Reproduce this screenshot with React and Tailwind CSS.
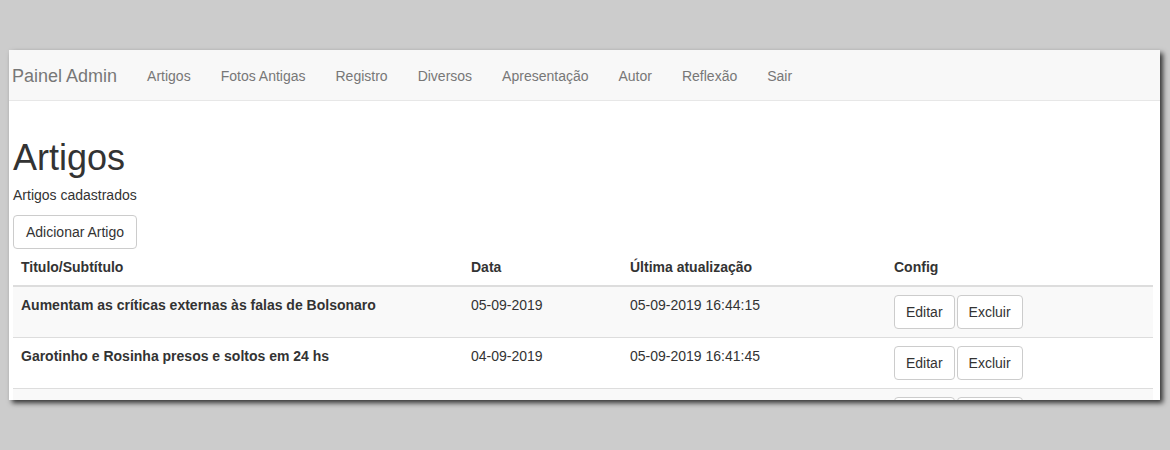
import React from 'react';

const navLinks = ['Artigos', 'Fotos Antigas', 'Registro', 'Diversos', 'Apresentação', 'Autor', 'Reflexão', 'Sair'];

const artigos = [
    { titulo: 'Aumentam as críticas externas às falas de Bolsonaro', data: '05-09-2019', atualizado: '05-09-2019 16:44:15' },
    { titulo: 'Garotinho e Rosinha presos e soltos em 24 hs', data: '04-09-2019', atualizado: '05-09-2019 16:41:45' },
    { titulo: 'Mourão diz que governo não vai interferir', data: '03-09-2019', atualizado: '04-09-2019 10:12:03' },
];

const btn = 'inline-block bg-white border border-[#cccccc] rounded-[4px] py-[6px] text-[14px] leading-[20px] text-[#333333] align-middle';

const App = () => {
    return (
        <div className="min-h-[450px] w-full bg-[#cccccc] pt-[50px] pl-[9px]" style={{ fontFamily: '"Liberation Sans", Arial, sans-serif' }}>
            <div className="w-[1151px] h-[350px] overflow-hidden bg-white shadow-[3px_3px_5px_rgba(0,0,0,0.75)] text-[14px] leading-[20px] text-[#333333]">
                {/* navbar */}
                <nav className="h-[51px] pt-[2px] bg-[#f8f8f8] border-b border-[#e7e7e7] flex items-center pl-[3px]">
                    <span className="text-[18px] leading-[20px] text-[#777777] pr-[15px]">Painel Admin</span>
                    {navLinks.map((l) => (
                        <span key={l} className="px-[15px] text-[#777777]">{l}</span>
                    ))}
                </nav>

                <div className="pl-[4px] pr-[7px]">
                    <h1 className="text-[36px] leading-[1.1] font-normal mt-[37px] mb-[7px]">Artigos</h1>
                    <p className="mb-[10px]">Artigos cadastrados</p>
                    <button className={`${btn} px-3`}>Adicionar Artigo</button>

                    <table className="w-full table-fixed border-collapse">
                        <colgroup>
                            <col className="w-[450px]" />
                            <col className="w-[159px]" />
                            <col className="w-[264px]" />
                            <col />
                        </colgroup>
                        <thead>
                            <tr className="border-b-2 border-[#dddddd]">
                                <th className="text-left font-bold p-2">Titulo/Subtítulo</th>
                                <th className="text-left font-bold p-2">Data</th>
                                <th className="text-left font-bold p-2">Última atualização</th>
                                <th className="text-left font-bold p-2">Config</th>
                            </tr>
                        </thead>
                        <tbody>
                            {artigos.map((a, i) => (
                                <tr key={i} className={`border-t border-[#dddddd] ${i % 2 === 0 ? 'bg-[#f9f9f9]' : 'bg-white'}`}>
                                    <td className="p-2 align-top font-bold">{a.titulo}</td>
                                    <td className="p-2 align-top">{a.data}</td>
                                    <td className="p-2 align-top">{a.atualizado}</td>
                                    <td className="p-2 align-top">
                                        <div className="flex gap-[2px]">
                                            <button className={`${btn} px-[11px]`}>Editar</button>
                                            <button className={`${btn} px-[11px]`}>Excluir</button>
                                        </div>
                                    </td>
                                </tr>
                            ))}
                        </tbody>
                    </table>
                </div>
            </div>
        </div>
    );
};

export default App;
